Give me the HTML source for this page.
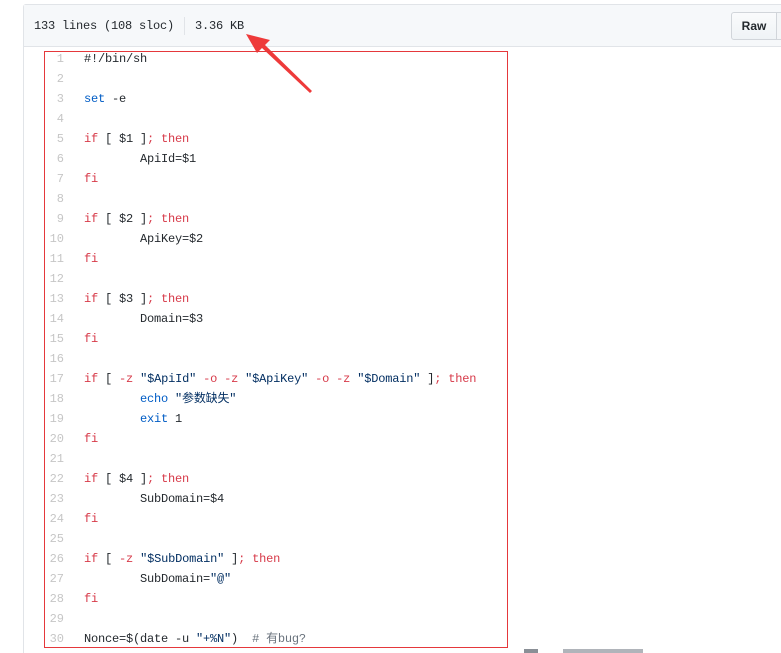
<!DOCTYPE html>
<html><head><meta charset="utf-8"><style>
*{margin:0;padding:0;box-sizing:border-box}
html,body{width:781px;height:653px;overflow:hidden}
body{background:#fff;position:relative;font-family:"Liberation Mono","Noto Sans CJK SC",monospace;font-size:12px;}
.box{position:absolute;left:23px;top:4px;width:758px;height:649px;border:1px solid #e1e4e8;border-right:none;border-bottom:none;border-radius:3px 0 0 0}
.hdr{position:absolute;left:24px;top:5px;width:757px;height:42px;background:#f6f8fa;border-bottom:1px solid #e1e4e8}
.info{position:absolute;left:34px;top:18px;color:#24292e;font-size:12px;line-height:16px;letter-spacing:-0.2px}
.sep{position:absolute;left:184px;top:17px;width:1px;height:18px;background:#e1e4e8}
.raw{position:absolute;left:731px;top:12px;width:46px;height:28px;border:1px solid #d1d5da;border-radius:3px 0 0 3px;background:linear-gradient(#fafbfc,#eff3f6);font-family:"Liberation Sans",sans-serif;font-weight:bold;font-size:12px;color:#24292e;text-align:center;line-height:26px}
.raw2{position:absolute;left:776px;top:12px;width:5px;height:28px;border:1px solid #d1d5da;border-right:none;background:#f3f5f7}
.red{position:absolute;left:44px;top:51px;width:464px;height:597px;border:1px solid #e5383b}
.ln{position:absolute;left:40px;width:24px;text-align:right;color:#c6c6c6;line-height:20px}
.cd{position:absolute;left:84px;color:#24292e;line-height:20px;white-space:pre;letter-spacing:-0.2px}
.k{color:#d73a49}.b{color:#005cc5}.s{color:#032f62}.c{color:#6a737d}
.foot{position:absolute;top:649px;height:4px;background:#8a8f96}
.w{position:absolute;left:0;top:1px;width:781px;height:640px}
</style></head><body>
<div class="box"></div>
<div class="hdr"></div>
<div class="info" style="left:34px">133 lines (108 sloc)</div>
<div class="sep"></div>
<div class="info" style="left:195px">3.36 KB</div>
<div class="raw">Raw</div><div class="raw2"></div>
<svg style="position:absolute;left:240px;top:28px" width="80" height="70"><polygon points="6,6 30,12 25,17 72,63 70,65 22,20 17,25" fill="#ee3a3a"/></svg>
<div class="red"></div>
<div class="w">
<div class="ln" style="top:48px">1</div><div class="cd" style="top:48px">#!/bin/sh</div>
<div class="ln" style="top:68px">2</div>
<div class="ln" style="top:88px">3</div><div class="cd" style="top:88px"><span class="b">set</span> -e</div>
<div class="ln" style="top:108px">4</div>
<div class="ln" style="top:128px">5</div><div class="cd" style="top:128px"><span class="k">if</span> [ $1 ]<span class="k">; then</span></div>
<div class="ln" style="top:148px">6</div><div class="cd" style="top:148px">        ApiId=$1</div>
<div class="ln" style="top:168px">7</div><div class="cd" style="top:168px"><span class="k">fi</span></div>
<div class="ln" style="top:188px">8</div>
<div class="ln" style="top:208px">9</div><div class="cd" style="top:208px"><span class="k">if</span> [ $2 ]<span class="k">; then</span></div>
<div class="ln" style="top:228px">10</div><div class="cd" style="top:228px">        ApiKey=$2</div>
<div class="ln" style="top:248px">11</div><div class="cd" style="top:248px"><span class="k">fi</span></div>
<div class="ln" style="top:268px">12</div>
<div class="ln" style="top:288px">13</div><div class="cd" style="top:288px"><span class="k">if</span> [ $3 ]<span class="k">; then</span></div>
<div class="ln" style="top:308px">14</div><div class="cd" style="top:308px">        Domain=$3</div>
<div class="ln" style="top:328px">15</div><div class="cd" style="top:328px"><span class="k">fi</span></div>
<div class="ln" style="top:348px">16</div>
<div class="ln" style="top:368px">17</div><div class="cd" style="top:368px"><span class="k">if</span> [ <span class="k">-z</span> <span class="s">"$ApiId"</span> <span class="k">-o -z</span> <span class="s">"$ApiKey"</span> <span class="k">-o -z</span> <span class="s">"$Domain"</span> ]<span class="k">; then</span></div>
<div class="ln" style="top:388px">18</div><div class="cd" style="top:388px">        <span class="b">echo</span> <span class="s">"参数缺失"</span></div>
<div class="ln" style="top:408px">19</div><div class="cd" style="top:408px">        <span class="b">exit</span> 1</div>
<div class="ln" style="top:428px">20</div><div class="cd" style="top:428px"><span class="k">fi</span></div>
<div class="ln" style="top:448px">21</div>
<div class="ln" style="top:468px">22</div><div class="cd" style="top:468px"><span class="k">if</span> [ $4 ]<span class="k">; then</span></div>
<div class="ln" style="top:488px">23</div><div class="cd" style="top:488px">        SubDomain=$4</div>
<div class="ln" style="top:508px">24</div><div class="cd" style="top:508px"><span class="k">fi</span></div>
<div class="ln" style="top:528px">25</div>
<div class="ln" style="top:548px">26</div><div class="cd" style="top:548px"><span class="k">if</span> [ <span class="k">-z</span> <span class="s">"$SubDomain"</span> ]<span class="k">; then</span></div>
<div class="ln" style="top:568px">27</div><div class="cd" style="top:568px">        SubDomain=<span class="s">"@"</span></div>
<div class="ln" style="top:588px">28</div><div class="cd" style="top:588px"><span class="k">fi</span></div>
<div class="ln" style="top:608px">29</div>
<div class="ln" style="top:628px">30</div><div class="cd" style="top:628px">Nonce=$(date -u <span class="s">"+%N"</span>)  <span class="c"># 有bug?</span></div>
</div>
<div class="foot" style="left:524px;width:14px"></div>
<div class="foot" style="left:563px;width:80px;background:#b0b4ba"></div>
</body></html>
